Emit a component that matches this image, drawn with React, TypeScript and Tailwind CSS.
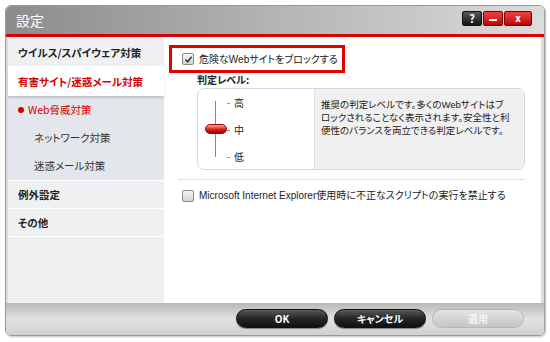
import React from 'react';

const jp = { fontFamily: '"Noto Sans CJK JP", "Noto Sans", sans-serif' };
const mixed = { fontFamily: '"Liberation Sans", "Noto Sans CJK JP", sans-serif' };

const Checkbox: React.FC<{ checked?: boolean }> = ({ checked }) => (
    <span className="w-[12px] h-[12px] rounded-[2px] border border-[#8a8a8a] bg-linear-to-b from-[#f4f4f4] to-[#d4d4d4] flex items-center justify-center shrink-0">
        {checked && (
            <svg width="9" height="9" viewBox="0 0 9 9">
                <path d="M1.5 4.5 L3.6 6.8 L7.6 1.8" fill="none" stroke="#333" strokeWidth="1.5" />
            </svg>
        )}
    </span>
);

const PillButton: React.FC<{ label: string; disabled?: boolean }> = ({ label, disabled }) => (
    <div
        className={
            disabled
                ? 'w-[92px] h-[19px] rounded-full border border-[#b8b8b8] bg-linear-to-b from-[#e4e4e4] to-[#c4c4c4] text-[#f4f4f4] text-[10px] font-bold flex items-center justify-center'
                : 'w-[92px] h-[19px] rounded-full border border-[#111] bg-linear-to-b from-[#5a5a5a] via-[#262626] to-[#111] text-white text-[10px] font-bold flex items-center justify-center shadow-[0_1px_1px_rgba(0,0,0,0.4)]'
        }
    >
        {label}
    </div>
);

const Level: React.FC<{ label: string; top: string }> = ({ label, top }) => (
    <div className={`absolute left-[29px] flex items-center gap-[4px] leading-[12px] ${top}`}>
        <span className="w-[3px] h-[1px] bg-[#999]" />
        <span>{label}</span>
    </div>
);

export default function App() {
    return (
        <div className="w-[550px] h-[342px] bg-white pt-[5px] pl-[5px] [font-feature-settings:'palt']" style={jp}>
            <div className="w-[540px] h-[331px] rounded-[6px] border border-[#9a9a9a] overflow-hidden flex flex-col shadow-[1px_1px_2px_rgba(0,0,0,0.25)]">
                {/* Title bar */}
                <div className="h-[28px] bg-linear-to-r from-[#8c8c8c] via-[#b4b4b4] to-[#dcdcdc] flex items-center justify-between pl-[10px] pr-[12px] shrink-0">
                    <span className="text-white text-[14px] leading-none">設定</span>
                    <div className="flex items-center gap-[1px] mt-[-4px]">
                        <div className="w-[20px] h-[15px] rounded-[2px] border border-[#111] bg-linear-to-b from-[#5a5a5a] to-[#151515] text-white text-[11px] font-bold flex items-center justify-center leading-none">?</div>
                        <div className="w-[20px] h-[15px] rounded-[2px] border border-[#7a0000] bg-linear-to-b from-[#f04040] to-[#b80000] flex items-center justify-center">
                            <span className="w-[8px] h-[2px] bg-white mt-[3px]" />
                        </div>
                        <div className="w-[28px] h-[15px] rounded-[2px] border border-[#7a0000] bg-linear-to-b from-[#f04040] to-[#b80000] text-white text-[10px] font-bold flex items-center justify-center leading-none">x</div>
                    </div>
                </div>
                <div className="h-[3px] bg-[#d80000] shrink-0" />

                {/* Body */}
                <div className="flex h-[266px] pl-[2px] pr-[3px] bg-[#dcdcdc]">
                    {/* Sidebar */}
                    <div className="w-[156px] bg-[#eef0f2] flex flex-col text-[10.5px]">
                        <div className="h-[30px] flex items-center pl-[10px] pt-[2px] font-bold text-[#222] border-b border-white">ウイルス/スパイウェア対策</div>
                        <div className="h-[29px] flex items-center pl-[10px] font-bold text-[#d40000] bg-white shadow-[0_2px_2px_rgba(0,0,0,0.15)] relative">有害サイト/迷惑メール対策</div>
                        <div className="bg-[#e3e6ea] flex flex-col pb-[1px] border-b border-white">
                            <div className="h-[28px] flex items-center pl-[10px] text-[#d40000]">
                                <span className="w-[6px] h-[6px] rounded-full bg-[#d40000] mr-[4px]" />
                                Web脅威対策
                            </div>
                            <div className="h-[28px] flex items-center pl-[26px] text-[#333]">ネットワーク対策</div>
                            <div className="h-[27px] flex items-center pl-[26px] text-[#333]">迷惑メール対策</div>
                        </div>
                        <div className="h-[28px] flex items-center pl-[10px] font-bold text-[#222] border-b border-white">例外設定</div>
                        <div className="h-[28px] flex items-center pl-[10px] font-bold text-[#222] border-b border-white">その他</div>
                        <div className="flex-1" />
                    </div>

                    {/* Content */}
                    <div className="flex-1 bg-white pt-[8px] pl-[5px] text-[10px] text-[#222]">
                        <div className="w-[176px] h-[28px] border-[3px] border-[#e00000] flex items-center pl-[10px] gap-[5px] whitespace-nowrap">
                            <Checkbox checked />
                            <span style={mixed}>危険なWebサイトをブロックする</span>
                        </div>
                        <div className="pl-[28px] font-bold leading-[14px]">判定レベル:</div>
                        <div className="ml-[28px] mt-[1px] w-[328px] h-[82px] rounded-[7px] border border-[#d8d8d8] flex overflow-hidden">
                            <div className="w-[116px] h-full relative">
                                <span className="absolute left-[17px] top-[12px] w-[1px] h-[56px] bg-[#888]" />
                                <Level label="高" top="top-[8px]" />
                                <Level label="中" top="top-[35px]" />
                                <Level label="低" top="top-[62px]" />
                                <span className="absolute left-[7px] top-[35px] w-[22px] h-[10px] rounded-full border border-[#900] bg-linear-to-b from-[#ff9a9a] via-[#e02020] to-[#a00000]" />
                            </div>
                            <div className="flex-1 bg-[#f0f0f0] border-l border-[#e0e0e0] pl-[6px] pt-[9px] leading-[13px] text-[9.5px] whitespace-nowrap" style={mixed}>
                                推奨の判定レベルです。多くのWebサイトはブ<br />
                                ロックされることなく表示されます。安全性と利<br />
                                便性のバランスを両立できる判定レベルです。
                            </div>
                        </div>
                        <div className="ml-[10px] mt-[9px] w-[346px] border-t border-dotted border-[#c8c8c8]" />
                        <div className="flex items-center gap-[5px] pl-[13px] mt-[8px] whitespace-nowrap">
                            <Checkbox />
                            <span style={mixed}>Microsoft Internet Explorer使用時に不正なスクリプトの実行を禁止する</span>
                        </div>
                    </div>
                </div>

                {/* Footer */}
                <div className="flex-1 bg-linear-to-b from-[#b8b8b8] via-[#e2e2e2] to-[#d0d0d0] flex items-center justify-end gap-[6px] pr-[20px] pb-[2px]">
                    <PillButton label="OK" />
                    <PillButton label="キャンセル" />
                    <PillButton label="適用" disabled />
                </div>
            </div>
        </div>
    );
}
